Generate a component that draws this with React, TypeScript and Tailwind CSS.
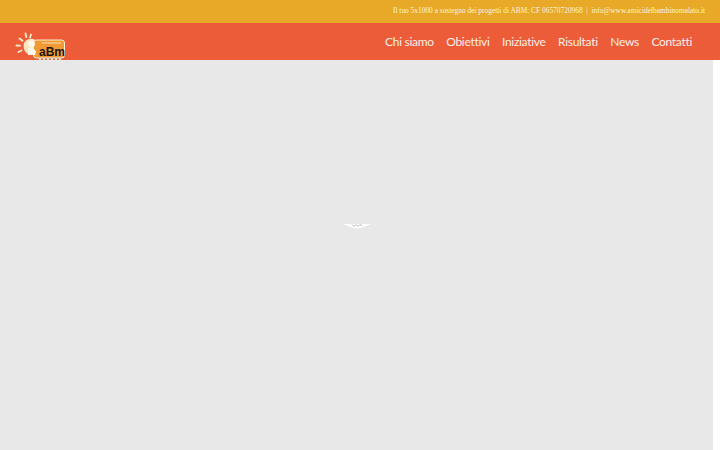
export default function App() {
  const nav = ["Chi siamo", "Obiettivi", "Iniziative", "Risultati", "News", "Contatti"];
  return (
    <div className="h-[450px] w-[720px] overflow-hidden bg-white flex flex-col">
      <div className="h-[23px] shrink-0 bg-[#e8a828] pb-[1px] flex items-center justify-end pr-[15px] text-[7.4px] text-[#fdf3dc] font-['Liberation_Serif',serif]">
        Il tuo 5x1000 a sostegno dei progetti di ABM: CF 06570720968 &nbsp;|&nbsp; info@www.amicidelbambinomalato.it
      </div>
      <div className="h-[37px] shrink-0 bg-[#ec5c38] flex justify-between pl-[15px] pr-[28px]">
        <svg width="51" height="29" viewBox="0 0 51 29" className="shrink-0 mt-[9px]">
          <g stroke="#fdeccf" strokeWidth="1.8" strokeLinecap="round">
            <path d="M10.5 1.5l.8 3.5M4.5 6.5l3 2.2M1.5 13.5l3.5.2M3.5 20l3-1.5M16 2.5l-1 3" />
          </g>
          <path d="M9 11c2-4 6-5 9-4 4 1 7 4 6 8l-1 7H13c-4-2-5-7-4-11z" fill="#fbe3c0" />
          <rect x="18.5" y="8" width="31" height="18" rx="3" fill="#f09a35" stroke="#fdeccf" strokeWidth="1" />
          <path d="M27 11h19" stroke="#f8c98a" strokeWidth="1.5" />
          <path d="M14 9c3-2 6 0 6 3s-3 4-5 3-3-4-1-6z" fill="#fff7ea" />
          <path d="M13 16c4-1 7 1 8 4l-1 3h-7z" fill="#fff7ea" />
          <text x="24" y="24" fontSize="12" fontWeight="700" fontFamily="'Liberation Sans',sans-serif" fill="#1d1410">aBm</text>
          <g fill="#fdf4e6" stroke="#7a5a40" strokeWidth=".3">
            <circle cx="25" cy="27" r="1.4" /><circle cx="29" cy="27" r="1.4" /><circle cx="33" cy="27" r="1.4" /><circle cx="37" cy="27" r="1.4" /><circle cx="41" cy="27" r="1.4" /><circle cx="45" cy="27" r="1.4" />
          </g>
        </svg>
        <nav className="flex items-center gap-[12.5px] text-[12px] tracking-[-0.3px] text-[#fdeee6] font-['Lato',sans-serif]">
          {nav.map((n) => <span key={n}>{n}</span>)}
        </nav>
      </div>
      <div className="flex-1 flex">
        <div className="w-[713px] bg-[#e8e8e8] flex justify-center pt-[164px] pl-[1px]">
          <svg width="28" height="5" viewBox="0 0 28 5" className="shrink-0">
            <path d="M0 0h28l-9 3.5-5 1-5-1z" fill="#ffffff" />
            <path d="M9 .5l2 2 2-2 2 2 2-2 2 1.5" stroke="#9a9a9a" strokeWidth=".7" fill="none" />
          </svg>
        </div>
        <div className="flex-1 bg-white" />
      </div>
    </div>
  );
}
